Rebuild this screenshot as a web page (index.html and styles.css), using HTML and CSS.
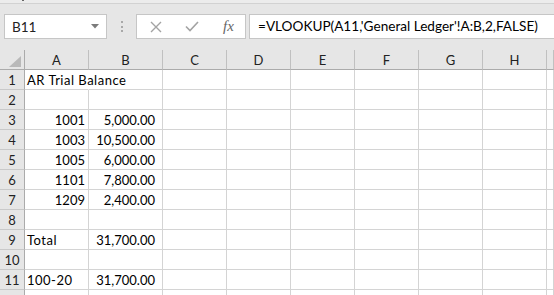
FILE: index.html
```html
<!DOCTYPE html>
<html lang="en">
<head>
<meta charset="UTF-8">
<meta name="viewport" content="width=device-width, initial-scale=1.0">
<title>AR Trial Balance</title>
<link rel="stylesheet" href="styles.css">
</head>
<body>

<div class="ribbon-edge"><span class="ribbon-mark"></span></div>

<div class="formula-bar">
    <div class="name-box">
        <span>B11</span>
        <svg class="name-arrow" width="8" height="5" viewBox="0 0 8 5"><path d="M0 0H8L4 4.5Z" fill="#7b7b7b"/></svg>
    </div>
    <div class="grip"><i></i><i></i><i></i></div>
    <div class="fx-buttons">
        <svg width="12" height="12" viewBox="0 0 12 12"><path d="M1 1L11 11M11 1L1 11" stroke="#a3a3a3" stroke-width="1.4" fill="none"/></svg>
        <svg width="14" height="11" viewBox="0 0 14 11"><path d="M1 5.5L5 9.5L13 1" stroke="#a3a3a3" stroke-width="1.6" fill="none"/></svg>
        <span class="fx">fx</span>
    </div>
    <div class="formula-input">=VLOOKUP(A11,'General Ledger'!A:B,2,FALSE)</div>
</div>

<div class="sheet">
    <div class="row head">
        <div class="corner"><svg width="12" height="11" viewBox="0 0 12 11"><path d="M12 0V11H0Z" fill="#b9b9b9"/></svg></div>
        <div>A</div><div>B</div><div>C</div><div>D</div><div>E</div><div>F</div><div>G</div><div>H</div><div></div>
    </div>
    <div class="row">
        <div class="num">1</div><div class="text spill">AR Trial Balance</div><div></div><div></div><div></div><div></div><div></div><div></div><div></div><div></div>
    </div>
    <div class="row">
        <div class="num">2</div><div></div><div></div><div></div><div></div><div></div><div></div><div></div><div></div><div></div>
    </div>
    <div class="row">
        <div class="num">3</div><div class="right">1001</div><div class="amount">5,000.00</div><div></div><div></div><div></div><div></div><div></div><div></div><div></div>
    </div>
    <div class="row">
        <div class="num">4</div><div class="right">1003</div><div class="amount">10,500.00</div><div></div><div></div><div></div><div></div><div></div><div></div><div></div>
    </div>
    <div class="row">
        <div class="num">5</div><div class="right">1005</div><div class="amount">6,000.00</div><div></div><div></div><div></div><div></div><div></div><div></div><div></div>
    </div>
    <div class="row">
        <div class="num">6</div><div class="right">1101</div><div class="amount">7,800.00</div><div></div><div></div><div></div><div></div><div></div><div></div><div></div>
    </div>
    <div class="row">
        <div class="num">7</div><div class="right">1209</div><div class="amount">2,400.00</div><div></div><div></div><div></div><div></div><div></div><div></div><div></div>
    </div>
    <div class="row">
        <div class="num">8</div><div></div><div></div><div></div><div></div><div></div><div></div><div></div><div></div><div></div>
    </div>
    <div class="row">
        <div class="num">9</div><div class="text">Total</div><div class="amount">31,700.00</div><div></div><div></div><div></div><div></div><div></div><div></div><div></div>
    </div>
    <div class="row">
        <div class="num">10</div><div></div><div></div><div></div><div></div><div></div><div></div><div></div><div></div><div></div>
    </div>
    <div class="row">
        <div class="num">11</div><div class="text">100-20</div><div class="amount">31,700.00</div><div></div><div></div><div></div><div></div><div></div><div></div><div></div>
    </div>
    <div class="row">
        <div class="num"></div><div></div><div></div><div></div><div></div><div></div><div></div><div></div><div></div><div></div>
    </div>
</div>

</body>
</html>
```

FILE: styles.css
```css
body {
    margin: 0;
    height: 295px;
    background-color: #e6e6e6;
    font-family: Lato, "Open Sans", sans-serif;
    color: #000;
    overflow: hidden;
}
.ribbon-edge {
    height: 3px;
    border-bottom: 1px solid #d2d2d2;
    background-color: #ececec;
    position: relative;
}
.ribbon-mark {
    position: absolute;
    left: 22px;
    top: 0;
    width: 2px;
    height: 1px;
    background-color: #666;
}
.formula-bar {
    display: flex;
    height: 25px;
    margin: 10px 0 11px;
}
.name-box {
    flex-shrink: 0;
    box-sizing: border-box;
    width: 103px;
    margin-left: 4px;
    background-color: #fff;
    border: 1px solid #c6c6c6;
    display: flex;
    align-items: center;
    justify-content: space-between;
    padding: 0 7px 0 7px;
    font-size: 13.5px;
    color: #222;
}
.grip {
    flex-shrink: 0;
    width: 29px;
    display: flex;
    flex-direction: column;
    align-items: center;
    justify-content: center;
    gap: 2.5px;
}
.grip i {
    display: block;
    width: 2px;
    height: 2px;
    background-color: #a8a8a8;
}
.fx-buttons {
    flex-shrink: 0;
    box-sizing: border-box;
    width: 110px;
    background-color: #fff;
    border: 1px solid #c6c6c6;
    display: flex;
    align-items: center;
    padding-left: 13px;
    gap: 23px;
}
.fx {
    font-family: "Liberation Serif", serif;
    font-style: italic;
    font-size: 15px;
    color: #666;
    margin-left: 1px;
}
.formula-input {
    flex: 1;
    min-width: 0;
    overflow: hidden;
    margin-left: 3px;
    box-sizing: border-box;
    background-color: #fff;
    border: 1px solid #c6c6c6;
    border-right: none;
    padding-left: 8px;
    font-size: 13.6px;
    line-height: 23px;
    white-space: nowrap;
}
.sheet {
    background-color: #fff;
}
.row {
    display: grid;
    grid-template-columns: 25px 64px 74px 64px 64px 64px 64px 64px 64px 1fr;
    height: 20px;
    font-size: 13px;
}
.row > div {
    box-sizing: border-box;
    border-right: 1px solid #d4d4d4;
    border-bottom: 1px solid #d4d4d4;
    padding: 2px 2px 0;
    line-height: 17px;
    white-space: nowrap;
    overflow: hidden;
}
.row .text {
    letter-spacing: 0.5px;
}
.row .spill {
    overflow: visible;
    border-right-color: transparent;
    position: relative;
    z-index: 1;
}
.row .num {
    background-color: #e6e6e6;
    border-right-color: #ababab;
    border-bottom-color: #c9c9c9;
    text-align: center;
    padding: 2px 0 0;
    color: #222;
}
.head > div {
    background-color: #e6e6e6;
    border-right-color: #c0c0c0;
    border-bottom-color: #ababab;
    text-align: center;
    color: #222;
}
.head .corner {
    border-right-color: #ababab;
    display: flex;
    align-items: flex-end;
    justify-content: flex-end;
    padding: 0 3px 2px 0;
}
.right {
    text-align: right;
    padding-right: 3px !important;
}
.amount {
    text-align: right;
    padding-right: 7px !important;
}
```
